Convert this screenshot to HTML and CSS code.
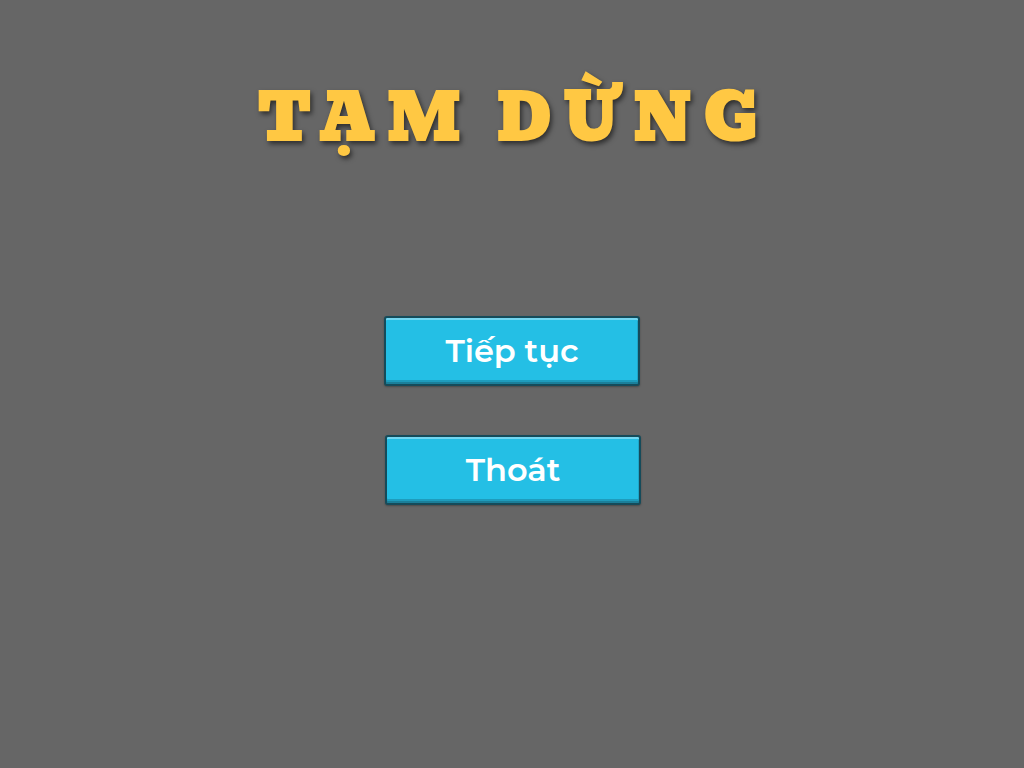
FILE: index.html
```html
<!DOCTYPE html>
<html lang="vi">
<head>
<meta charset="utf-8">
<title>Tạm dừng</title>
<link rel="stylesheet" href="styles.css">
</head>
<body>
<main class="screen">
  <h1 class="title">TẠM DỪNG</h1>
  <div class="menu">
    <button class="btn">Tiếp tục</button>
    <button class="btn btn-exit">Thoát</button>
  </div>
</main>
</body>
</html>
```
FILE: styles.css
```css
html, body {
  margin: 0;
  padding: 0;
  width: 1024px;
  height: 768px;
  background: #666666;
  overflow: hidden;
}
.screen {
  display: flex;
  flex-direction: column;
  align-items: center;
  height: 768px;
}
.title {
  margin: 78px 0 0 0;
  padding-left: 3px;
  font-family: "Bevan", "DejaVu Serif", serif;
  font-weight: normal;
  font-size: 65px;
  line-height: 80px;
  letter-spacing: 11px;
  color: #ffc843;
  text-shadow: 2px 3px 5px rgba(0,0,0,0.55);
}
.menu {
  display: flex;
  flex-direction: column;
  align-items: center;
  gap: 49px;
  margin-top: 158px;
}
.btn {
  box-sizing: border-box;
  width: 256px;
  height: 70px;
  border: 2px solid #154b5a;
  border-radius: 3px;
  background: #24bfe5;
  box-shadow:
    inset 0 2px 0 #74d6f0,
    inset 0 -2px 0 #1b7f99,
    inset 0 -4px 0 #1e9cbc,
    inset -1px 0 0 #1ea6c8,
    0 1px 2px rgba(0,0,0,0.3);
  color: #ffffff;
  font-family: "Montserrat", "Open Sans", sans-serif;
  font-weight: 600;
  font-size: 32px;
  padding: 0 0 2px 0;
  cursor: pointer;
}
.btn-exit {
  position: relative;
  left: 1px;
}
```
